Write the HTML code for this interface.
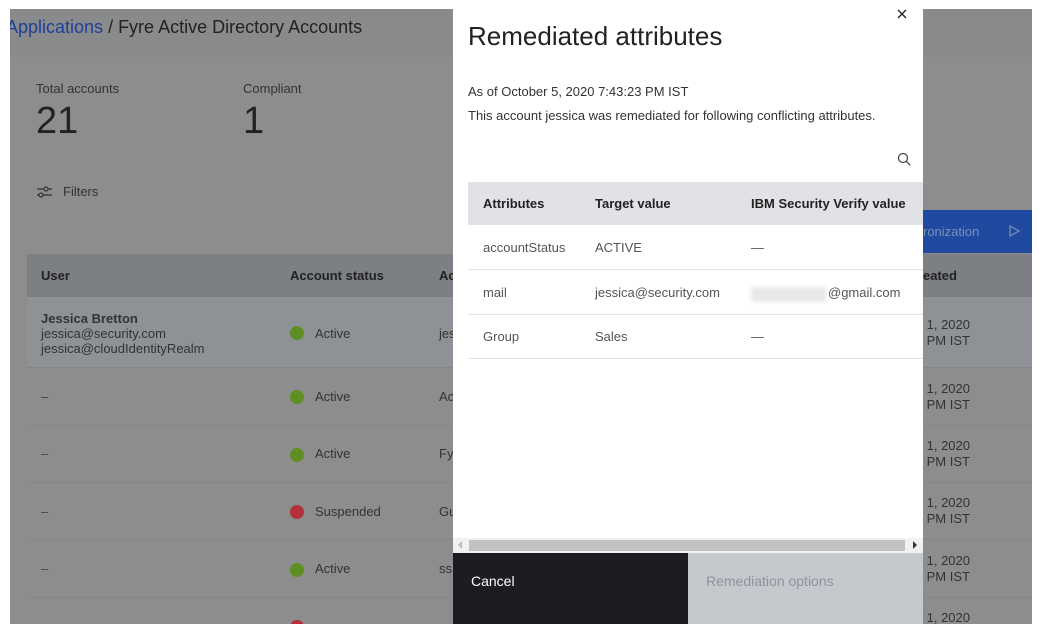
<!DOCTYPE html>
<html><head><style>
*{margin:0;padding:0;box-sizing:border-box}
body{width:1039px;height:633px;background:#fff;position:relative;overflow:hidden;font-family:"Liberation Sans",sans-serif;color:#222}
.a{position:absolute}
.bg{left:10px;top:9px;width:1022px;height:615px;background:#8d8d8d;overflow:hidden}
.t{position:absolute;white-space:nowrap}
.dot{position:absolute;width:14px;height:14px;border-radius:50%}
.g{background:#5f8f22}.r{background:#b3303a}
.row{position:absolute;left:17px;width:1005px;border-bottom:1px solid #848586}
</style></head><body>
<div class="a bg">
 <div class="a" style="left:0;top:0;width:1022px;height:48px;background:#898a8b"></div>
 <div class="t" style="left:-4px;top:8px;font-size:18px;color:#1f3f9a">Applications <span style="color:#222">/ Fyre Active Directory Accounts</span></div>
 <div class="t" style="left:26px;top:72px;font-size:13px;color:#333">Total accounts</div>
 <div class="t" style="left:26px;top:91px;font-size:38px;color:#222">21</div>
 <div class="t" style="left:233px;top:72px;font-size:13px;color:#333">Compliant</div>
 <div class="t" style="left:233px;top:91px;font-size:38px;color:#222">1</div>
 <svg class="a" style="left:26px;top:176px" width="16" height="14" viewBox="0 0 16 14" fill="none" stroke="#333" stroke-width="1.2"><path d="M1 4h15M1 10h15"/><circle cx="10" cy="4" r="2" fill="#8d8d8d"/><circle cx="5" cy="10" r="2" fill="#8d8d8d"/></svg>
 <div class="t" style="left:53px;top:175px;font-size:13px;color:#333">Filters</div>
 <div class="a" style="left:913px;top:201px;width:109px;height:43px;background:#1f4aa0"></div>
 <div class="t" style="left:913px;top:215px;font-size:13px;color:#7b8fb8">ronization</div>
 <svg class="a" style="left:998px;top:216px" width="12" height="12" viewBox="0 0 12 12" fill="none" stroke="#7b8fb8" stroke-width="1.2"><path d="M2 1l9 5-9 5z"/></svg>
 <div class="a" style="left:17px;top:245px;width:1005px;height:43px;background:#7c7f83"></div>
 <div class="t" style="left:31px;top:259px;font-size:13px;font-weight:bold">User</div>
 <div class="t" style="left:280px;top:259px;font-size:13px;font-weight:bold">Account status</div>
 <div class="t" style="left:429px;top:259px;font-size:13px;font-weight:bold">Ac</div>
 <div class="t" style="left:913px;top:259px;font-size:13px;font-weight:bold">eated</div>
 <div class="row" style="top:288px;height:71px;background:#8e9196"></div>
 <div class="t" style="left:31px;top:302px;font-size:13px;font-weight:bold;color:#333;line-height:15px">Jessica Bretton<br><span style="font-weight:normal">jessica@security.com<br>jessica@cloudIdentityRealm</span></div>
 <div class="dot g" style="left:280px;top:317px"></div><div class="t" style="left:305px;top:317px;font-size:13px;color:#333">Active</div>
 <div class="t" style="left:429px;top:317px;font-size:13px;color:#333">jes</div>
 <div class="t" style="left:913px;top:308px;font-size:13px;color:#333;line-height:16px">&nbsp;1, 2020<br>&nbsp;PM IST</div>

 <div class="row" style="top:359px;height:58px"></div>
 <div class="t" style="left:31px;top:380px;font-size:13px;color:#444">–</div>
 <div class="dot g" style="left:280px;top:381px"></div><div class="t" style="left:305px;top:380px;font-size:13px;color:#333">Active</div>
 <div class="t" style="left:429px;top:380px;font-size:13px;color:#333">Ac</div>
 <div class="t" style="left:913px;top:372px;font-size:13px;color:#333;line-height:16px">&nbsp;1, 2020<br>&nbsp;PM IST</div>

 <div class="row" style="top:417px;height:57px"></div>
 <div class="t" style="left:31px;top:437px;font-size:13px;color:#444">–</div>
 <div class="dot g" style="left:280px;top:439px"></div><div class="t" style="left:305px;top:437px;font-size:13px;color:#333">Active</div>
 <div class="t" style="left:429px;top:437px;font-size:13px;color:#333">Fy</div>
 <div class="t" style="left:913px;top:429px;font-size:13px;color:#333;line-height:16px">&nbsp;1, 2020<br>&nbsp;PM IST</div>

 <div class="row" style="top:474px;height:57px"></div>
 <div class="t" style="left:31px;top:495px;font-size:13px;color:#444">–</div>
 <div class="dot r" style="left:280px;top:496px"></div><div class="t" style="left:305px;top:495px;font-size:13px;color:#333">Suspended</div>
 <div class="t" style="left:429px;top:495px;font-size:13px;color:#333">Gu</div>
 <div class="t" style="left:913px;top:486px;font-size:13px;color:#333;line-height:16px">&nbsp;1, 2020<br>&nbsp;PM IST</div>

 <div class="row" style="top:531px;height:58px"></div>
 <div class="t" style="left:31px;top:552px;font-size:13px;color:#444">–</div>
 <div class="dot g" style="left:280px;top:554px"></div><div class="t" style="left:305px;top:552px;font-size:13px;color:#333">Active</div>
 <div class="t" style="left:429px;top:552px;font-size:13px;color:#333">ss</div>
 <div class="t" style="left:913px;top:544px;font-size:13px;color:#333;line-height:16px">&nbsp;1, 2020<br>&nbsp;PM IST</div>
 <div class="dot r" style="left:280px;top:611px"></div>
 <div class="t" style="left:913px;top:601px;font-size:13px;color:#333">&nbsp;1, 2020</div>
</div>

<div class="a" style="left:453px;top:0;width:470px;height:624px;background:#fff">
 <svg class="a" style="left:443px;top:8px" width="12" height="12" viewBox="0 0 12 12" stroke="#222" stroke-width="1.4"><path d="M2 2l8 8M10 2l-8 8"/></svg>
 <div class="t" style="left:15px;top:21px;font-size:26px;color:#222">Remediated attributes</div>
 <div class="t" style="left:15px;top:84px;font-size:13px;color:#333">As of October 5, 2020 7:43:23 PM IST</div>
 <div class="t" style="left:15px;top:108px;font-size:13px;color:#333">This account jessica was remediated for following conflicting attributes.</div>
 <svg class="a" style="left:444px;top:152px" width="14" height="14" viewBox="0 0 14 14" fill="none" stroke="#444" stroke-width="1.2"><circle cx="6" cy="6" r="4.5"/><path d="M9.3 9.3l4 4"/></svg>
 <div class="a" style="left:15px;top:182px;width:455px;height:43px;background:#e0e2e6"></div>
 <div class="t" style="left:30px;top:196px;font-size:13px;font-weight:bold">Attributes</div>
 <div class="t" style="left:142px;top:196px;font-size:13px;font-weight:bold">Target value</div>
 <div class="t" style="left:298px;top:196px;font-size:13px;font-weight:bold">IBM Security Verify value</div>
 <div class="a" style="left:15px;top:269px;width:455px;height:1px;background:#e4e4e4"></div>
 <div class="a" style="left:15px;top:314px;width:455px;height:1px;background:#e4e4e4"></div>
 <div class="a" style="left:15px;top:358px;width:455px;height:1px;background:#e4e4e4"></div>
 <div class="t" style="left:30px;top:240px;font-size:13px;color:#555">accountStatus</div>
 <div class="t" style="left:142px;top:240px;font-size:13px;color:#555">ACTIVE</div>
 <div class="t" style="left:298px;top:240px;font-size:13px;color:#555">—</div>
 <div class="t" style="left:30px;top:285px;font-size:13px;color:#555">mail</div>
 <div class="t" style="left:142px;top:285px;font-size:13px;color:#555">jessica@security.com</div>
 <div class="a" style="left:298px;top:287px;width:75px;height:15px;background:#e8e8e8;filter:blur(2px)"></div>
 <div class="t" style="left:375px;top:285px;font-size:13px;color:#555">@gmail.com</div>
 <div class="t" style="left:30px;top:329px;font-size:13px;color:#555">Group</div>
 <div class="t" style="left:142px;top:329px;font-size:13px;color:#555">Sales</div>
 <div class="t" style="left:298px;top:329px;font-size:13px;color:#555">—</div>
 <div class="a" style="left:0;top:538px;width:470px;height:15px;background:#f1f1f1"></div>
 <div class="a" style="left:16px;top:540px;width:436px;height:11px;background:#c1c1c1"></div>
 <svg class="a" style="left:4px;top:541px" width="6" height="8"><path d="M5 0v8L1 4z" fill="#bbb"/></svg>
 <svg class="a" style="left:459px;top:541px" width="6" height="8"><path d="M1 0v8l4-4z" fill="#333"/></svg>
 <div class="a" style="left:0;top:553px;width:235px;height:71px;background:#1b1d21"></div>
 <div class="t" style="left:18px;top:573px;font-size:14px;color:#fff">Cancel</div>
 <div class="a" style="left:235px;top:553px;width:235px;height:71px;background:#c5c8cd"></div>
 <div class="t" style="left:253px;top:573px;font-size:14px;color:#8e949c">Remediation options</div>
</div>
</body></html>
